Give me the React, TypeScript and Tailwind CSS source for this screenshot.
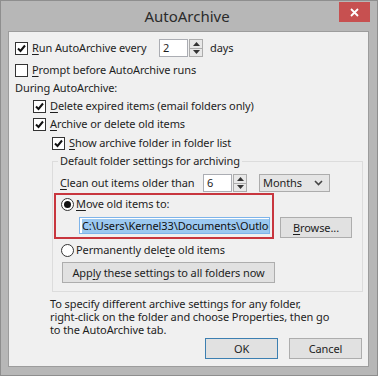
import React from 'react'

// ── Small Win8-style controls ─────────────────────────────────────────────────

function Check({ checked }: { checked?: boolean }) {
  return (
    <span className="flex h-[13px] w-[13px] shrink-0 items-center justify-center border border-[#333] bg-white">
      {checked && (
        <svg width="9" height="9" viewBox="0 0 9 9">
          <path d="M1 4.5 L3.5 7 L8 1.5" fill="none" stroke="#111" strokeWidth="2" />
        </svg>
      )}
    </span>
  )
}

function Radio({ checked }: { checked?: boolean }) {
  return (
    <span className="flex h-[13px] w-[13px] shrink-0 items-center justify-center rounded-full border border-[#333] bg-white">
      {checked && <span className="h-[7px] w-[7px] rounded-full bg-[#111]" />}
    </span>
  )
}

function Spin({ value }: { value: string }) {
  return (
    <span className="flex h-[18px] shrink-0 items-stretch">
      <span className="flex w-[29px] items-center border border-[#abadb3] bg-white pl-[3px]">{value}</span>
      <span className="ml-[1px] flex w-[14px] flex-col border border-[#acacac] bg-[#e8e8e8]">
        <span className="flex flex-1 items-center justify-center border-b border-[#acacac]">
          <svg width="7" height="4" viewBox="0 0 7 4"><path d="M0 4 L3.5 0 L7 4 Z" fill="#333" /></svg>
        </span>
        <span className="flex flex-1 items-center justify-center">
          <svg width="7" height="4" viewBox="0 0 7 4"><path d="M0 0 L3.5 4 L7 0 Z" fill="#333" /></svg>
        </span>
      </span>
    </span>
  )
}

function Btn({ children, w, primary }: { children: React.ReactNode; w: string; primary?: boolean }) {
  return (
    <span
      className={
        'flex h-[21px] shrink-0 items-center justify-center whitespace-nowrap bg-[#e1e1e1] border ' +
        w +
        (primary ? ' border-[#3c7fb1]' : ' border-[#adadad]')
      }
    >
      {children}
    </span>
  )
}

function U({ children }: { children: React.ReactNode }) {
  return <span className="underline underline-offset-[2px]">{children}</span>
}

// ── Dialog ────────────────────────────────────────────────────────────────────

export default function App() {
  return (
    <div
      className="h-[376px] w-[378px] whitespace-nowrap border border-[#8e8e8e] bg-[#b7b7b7] text-[11px] leading-[14px] tracking-[-0.1px] text-[#1e1e1e]"
      style={{ fontFamily: '"Noto Sans", "Open Sans", sans-serif' }}
    >
      {/* Title bar */}
      <div className="flex h-[30px] items-start">
        <div className="flex h-[30px] flex-1 items-center justify-center pl-[34px] text-[15px] tracking-normal text-[#2b2b2b]">
          AutoArchive
        </div>
        <div className="mr-[7px] mt-[1px] flex h-[20px] w-[31px] items-center justify-center bg-[#c75050]">
          <svg width="9" height="9" viewBox="0 0 9 9">
            <path d="M1 1 L8 8 M8 1 L1 8" stroke="#fff" strokeWidth="1.8" />
          </svg>
        </div>
      </div>

      {/* Client area */}
      <div className="ml-[7px] h-[336px] w-[361px] border border-[#9c9c9c] bg-[#f0f0f0] pl-[6px] pt-[7px]">
        <div className="flex h-[18px] items-center">
          <Check checked />
          <span className="ml-[4px] w-[127px] shrink-0"><U>R</U>un AutoArchive every</span>
          <Spin value="2" />
          <span className="ml-[7px]">days</span>
        </div>
        <div className="mt-[4px] flex h-[18px] items-center">
          <Check />
          <span className="ml-[4px]"><U>P</U>rompt before AutoArchive runs</span>
        </div>
        <div className="flex h-[18px] items-center">During AutoArchive:</div>
        <div className="ml-[18px] flex h-[18px] items-center">
          <Check checked />
          <span className="ml-[4px]"><U>D</U>elete expired items (email folders only)</span>
        </div>
        <div className="ml-[18px] flex h-[18px] items-center">
          <Check checked />
          <span className="ml-[4px]"><U>A</U>rchive or delete old items</span>
        </div>
        <div className="ml-[37px] mt-[1px] flex h-[18px] items-center">
          <Check checked />
          <span className="ml-[4px]"><U>S</U>how archive folder in folder list</span>
        </div>

        {/* Group box */}
        <fieldset className="ml-[37px] mt-[1px] w-[311px] border border-[#dcdcdc] pb-[8px] pl-[1px]">
          <legend className="ml-[4px] px-[2px] leading-[16px]">Default folder settings for archiving</legend>
          <div className="ml-[6px] mt-[5px] flex h-[18px] items-center">
            <span className="w-[143px] shrink-0"><U>C</U>lean out items older than</span>
            <Spin value="6" />
            <span className="ml-[12px] flex h-[18px] w-[71px] shrink-0 items-center justify-between border border-[#acacac] bg-[#e5e5e5] pl-[3px] pr-[6px]">
              Months
              <svg width="9" height="6" viewBox="0 0 9 6"><path d="M1 1 L4.5 4.5 L8 1" fill="none" stroke="#444" strokeWidth="1.6" /></svg>
            </span>
          </div>

          <div className="mt-[1px] flex items-end">
            <div className="h-[46px] w-[220px] shrink-0 border-2 border-[#c8363e] pl-[5px]">
              <div className="flex h-[18px] items-center">
                <Radio checked />
                <span className="ml-[2px]"><U>M</U>ove old items to:</span>
              </div>
              <div className="ml-[18px] mt-[4px] flex h-[17px] w-[191px] items-center overflow-hidden border border-[#7eb4ea] bg-white pl-[2px]">
                <span className="whitespace-nowrap bg-[#9bc8f0] text-[#111]">C:\Users\Kernel33\Documents\Outlook Files</span>
              </div>
            </div>
            <span className="mb-[1px] ml-[6px]">
              <Btn w="w-[72px]"><U>B</U>rowse...</Btn>
            </span>
          </div>

          <div className="ml-[7px] mt-[2px] flex h-[18px] items-center">
            <Radio />
            <span className="ml-[2px]">Permanently dele<U>t</U>e old items</span>
          </div>
          <div className="ml-[8px] mt-[3px] flex">
            <Btn w="w-[213px]">App<U>l</U>y these settings to all folders now</Btn>
          </div>
        </fieldset>

        <p className="ml-[35px] mt-[5px] leading-[13px]">
          To specify different archive settings for any folder,
          <br />
          right-click on the folder and choose Properties, then go
          <br />
          to the AutoArchive tab.
        </p>

        <div className="mt-[2px] flex justify-end gap-[11px] pr-[6px]">
          <Btn w="w-[73px]" primary>OK</Btn>
          <Btn w="w-[73px]">Cancel</Btn>
        </div>
      </div>
    </div>
  )
}
